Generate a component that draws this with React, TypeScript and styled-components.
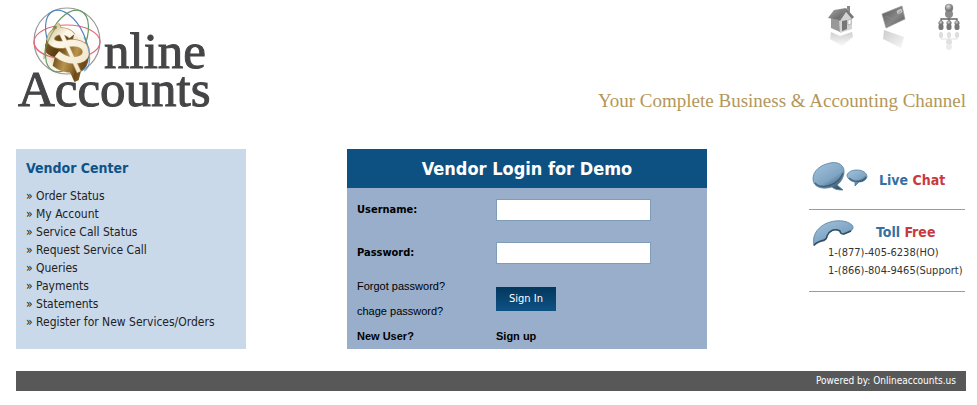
import React from "react";
import styled, { createGlobalStyle } from "styled-components";

const sans = `"DejaVu Sans Condensed", "DejaVu Sans", Tahoma, sans-serif`;

const GlobalStyle = createGlobalStyle`
  * { box-sizing: border-box; }
  body { margin: 0; background: #fff; color: #000; font: 12px/18px ${sans}; }
  a { color: inherit; text-decoration: none; }
  h1, h2, p, ul { margin: 0; padding: 0; }
`;

const Page = styled.div`
  padding: 0 11px 0 16px;
`;

const Header = styled.header`
  display: flex;
  justify-content: space-between;
  height: 149px;
`;

const Logo = styled.a`
  display: flex;
  flex-direction: column;
  padding: 4px 0 0 2px;
  font: 51px/38px "Liberation Serif", serif;
  color: #454547;
  -webkit-text-stroke: 1px #454547;
`;

const LogoTop = styled.span`
  display: flex;
  align-items: flex-end;
  height: 66px;
  padding-left: 12px;
`;

const Emblem = styled.svg`
  flex: none;
  width: 74px;
  height: 80px;
  align-self: flex-start;
`;

const HeaderSide = styled.div`
  display: flex;
  flex-direction: column;
  align-items: flex-end;
  justify-content: space-between;
  padding: 2px 0 36px;
`;

const QuickLinks = styled.nav`
  display: flex;
  gap: 24px;
  padding-right: 2px;

  a, svg { display: block; }
`;

const Tagline = styled.p`
  font: 19px/24px "Liberation Serif", serif;
  color: #b3975a;
`;

const Main = styled.main`
  display: flex;
  justify-content: space-between;
  align-items: stretch;
`;

const Sidebar = styled.nav`
  width: 230px;
  min-height: 200px;
  padding: 10px;
  background: #cad9ea;
`;

const SidebarTitle = styled.h2`
  margin-bottom: 10px;
  font-size: 14px;
  line-height: 18px;
  color: #0e5387;
`;

const LinkList = styled.ul`
  list-style: none;
  color: #222;

  li::before { content: "» "; }
`;

const LoginPanel = styled.form`
  width: 360px;
  background: #98aeca;
  font: 11px/18px "Liberation Sans", Arial, sans-serif;
`;

const LoginTitle = styled.h1`
  background: #0d5183;
  color: #fff;
  font: bold 18px/39px ${sans};
  text-align: center;
`;

const Fields = styled.div`
  display: grid;
  grid-template-columns: 139px 1fr;
  grid-template-rows: 43px 43px 49px 25px;
  align-items: center;
  padding-left: 10px;
`;

const Label = styled.label`
  font: bold 11px/18px ${sans};
`;

const Input = styled.input`
  width: 155px;
  height: 22px;
  padding: 1px 4px;
  border: 1px solid #7f9db9;
  background: #fff;
  font: 12px ${sans};
`;

const HelpLinks = styled.div`
  display: flex;
  flex-direction: column;
  gap: 7px;
`;

const SignIn = styled.button`
  width: 60px;
  height: 24px;
  padding: 0;
  border: 0;
  background: linear-gradient(#03375d, #0e5285);
  color: #fff;
  font: 11px/22px ${sans};
`;

const Strong = styled.strong`
  font-weight: bold;
`;

const Contact = styled.aside`
  width: 158px;
  padding: 0 1px;
  color: #333;
`;

const ContactBlock = styled.section<{ $top: number; $bottom: number }>`
  padding: ${(p) => p.$top}px 0 ${(p) => p.$bottom}px;
  border-bottom: 1px solid #7ba4c8;
`;

const ContactHead = styled.a<{ $gap: number; $drop?: number }>`
  display: flex;
  align-items: center;
  gap: ${(p) => p.$gap}px;
  padding-left: 3px;
  font: bold 14px/18px ${sans};
  color: #38709f;

  span { padding-top: ${(p) => p.$drop ?? 0}px; }
  b { color: #c93a40; }
`;

const Phone = styled.p`
  padding-left: 19px;
  font-size: 11px;
  white-space: nowrap;
`;

const Footer = styled.footer`
  margin-top: 22px;
  padding-right: 10px;
  background: #585858;
  color: #fff;
  font-size: 10px;
  line-height: 20px;
  text-align: right;
`;

const curve = "M42 32C36 25 24 26 21 33C19 40 28 42 36 40C46 37 57 41 56 49C54 58 38 59 27 50";
const bar = "M27 20L49 68";

const LogoEmblem = () => (
  <Emblem viewBox="0 0 74 80" aria-hidden="true">
    <defs>
      <linearGradient id="goldSide" gradientUnits="userSpaceOnUse" x1="15" y1="30" x2="60" y2="70">
        <stop offset="0" stopColor="#8a692d" />
        <stop offset=".3" stopColor="#5c3d12" />
        <stop offset=".55" stopColor="#b8944c" />
        <stop offset=".8" stopColor="#6a4716" />
        <stop offset="1" stopColor="#b08b45" />
      </linearGradient>
      <linearGradient id="goldFace" gradientUnits="userSpaceOnUse" x1="20" y1="22" x2="56" y2="62">
        <stop offset="0" stopColor="#d3bb88" />
        <stop offset=".3" stopColor="#fdf8ec" />
        <stop offset="1" stopColor="#f2e6cc" />
      </linearGradient>
      <radialGradient id="glow">
        <stop offset=".4" stopColor="#d8bd82" stopOpacity=".7" />
        <stop offset="1" stopColor="#fff" stopOpacity="0" />
      </radialGradient>
    </defs>
    <ellipse cx="36" cy="48" rx="30" ry="29" fill="url(#glow)" />
    <g fill="none" strokeWidth="1.2">
      <circle cx="37" cy="37" r="33" stroke="#999" />
      <ellipse cx="37" cy="38" rx="33" ry="17" stroke="#e4697a" />
      <ellipse cx="37" cy="37" rx="18" ry="33" stroke="#5286ba" transform="rotate(-25 37 37)" />
      <ellipse cx="37" cy="37" rx="18" ry="33" stroke="#659a60" transform="rotate(25 37 37)" />
    </g>
    <g fill="none" stroke="url(#goldSide)">
      {[9, 8, 7, 6, 5, 4, 3, 2, 1].map((d) => (
        <g key={d} transform={`translate(${-d / 4} ${d})`}>
          <path d={curve} strokeWidth="7" />
          <path d={bar} strokeWidth="5" />
        </g>
      ))}
    </g>
    <g fill="none" stroke="#b2935a">
      <path d={curve} strokeWidth="8" />
      <path d={bar} strokeWidth="5" />
    </g>
    <g fill="none" stroke="url(#goldFace)">
      <path d={curve} strokeWidth="6.5" />
      <path d={bar} strokeWidth="3.6" />
    </g>
    <g fill="none" strokeWidth="1.2" opacity=".7">
      <path d="M4 38A33 17 0 0 0 18 52" stroke="#e4697a" />
      <path d="M14 55C14 45 19 32 27 22" stroke="#659a60" />
      <path d="M54 33C62 50 61 63 54 67" stroke="#5286ba" />
    </g>
  </Emblem>
);

const HomeIcon = () => (
  <svg width="30" height="50" viewBox="0 0 30 50" aria-hidden="true">
    <defs>
      <linearGradient id="roof" x1="0" y1="0" x2="1" y2="1">
        <stop stopColor="#aaa" /><stop offset="1" stopColor="#555" />
      </linearGradient>
      <linearGradient id="fadeA" x1="0" y1="0" x2="0" y2="1">
        <stop stopColor="#d0d0d0" /><stop offset="1" stopColor="#fafafa" />
      </linearGradient>
    </defs>
    <path d="M5 30L14 34L26 30L27 35L16 44L4 37Z" fill="url(#fadeA)" />
    <path d="M5 16L14 18V30L5 26Z" fill="#999" />
    <path d="M13 18L20 10L26 16V27L14 31Z" fill="#d3d3d3" />
    <path d="M16 19L21 18V27L16 29Z" fill="#777" />
    <path d="M22 18L25 17V22L22 23Z" fill="#fff" stroke="#999" strokeWidth=".6" />
    <path d="M2 16L8 8L20 6L13 18Z" fill="url(#roof)" />
    <path d="M12 18L20 6L28 15L26 17L20 10L14 19Z" fill="#777" />
    <path d="M21 7V4H24V11Z" fill="#888" />
  </svg>
);

const MailIcon = () => (
  <svg width="30" height="50" viewBox="0 0 30 50" aria-hidden="true">
    <defs>
      <linearGradient id="card" x1="0" y1="0" x2="1" y2="1">
        <stop stopColor="#555" /><stop offset=".55" stopColor="#888" /><stop offset="1" stopColor="#555" />
      </linearGradient>
      <linearGradient id="fadeB" x1="0" y1="0" x2="1" y2="1">
        <stop stopColor="#ccc" /><stop offset="1" stopColor="#f8f8f8" />
      </linearGradient>
    </defs>
    <path d="M4 28L24 35L21 46L3 37Z" fill="url(#fadeB)" />
    <path d="M2 12L22 4L25 17L6 26Z" fill="url(#card)" stroke="#999" strokeWidth=".7" />
    <path d="M17 9L21 7L22 10L18 12Z" fill="#bbb" stroke="#ddd" strokeWidth=".6" />
    <path d="M5 14l9 3 7-8" fill="none" stroke="#888" strokeWidth=".7" />
  </svg>
);

const SitemapIcon = () => (
  <svg width="30" height="50" viewBox="0 0 30 50" aria-hidden="true">
    <defs>
      <radialGradient id="ball" cx=".4" cy=".3">
        <stop stopColor="#ddd" /><stop offset="1" stopColor="#777" />
      </radialGradient>
    </defs>
    <path d="M15 15V21M7 21V17H23V21" fill="none" stroke="#666" strokeWidth="1.3" />
    <ellipse cx="15" cy="12" rx="4" ry="4" fill="#8b8b8b" />
    <circle cx="15" cy="6" r="4" fill="url(#ball)" stroke="#888" strokeWidth=".5" />
    {[7, 15, 23].map((x) => (
      <g key={x}>
        <rect x={x - 2.5} y="22" width="5" height="6" rx="2" fill="#777" />
        <circle cx={x} cy="21" r="2.3" fill="url(#ball)" stroke="#777" strokeWidth=".6" />
        <rect x={x - 2} y="30" width="4" height="6" rx="2" fill="#ddd" />
      </g>
    ))}
    <path d="M15 32V38M7 36V37H23V36" fill="none" stroke="#e2e2e2" />
    <circle cx="15" cy="40" r="3" fill="#e0e0e0" />
    <circle cx="15" cy="45" r="3" fill="#ebebeb" />
  </svg>
);

const BlueFill = ({ id }: { id: string }) => (
  <defs>
    <linearGradient id={id} x1="0" y1="0" x2=".7" y2="1">
      <stop stopColor="#a4c3dc" /><stop offset=".65" stopColor="#7fa5c4" /><stop offset="1" stopColor="#36556e" />
    </linearGradient>
  </defs>
);

const ChatIcon = () => (
  <svg width="56" height="32" viewBox="0 0 56 32" aria-hidden="true">
    <BlueFill id="chat" />
    <g fill="url(#chat)" stroke="#56809f" strokeWidth=".8">
      <path d="M18 2C27 0 33 5 32 12C31 18 28 22 25 24L31 29C25 29 22 28 20 26C10 29 1 26 1 18C1 10 8 4 18 2Z" />
      <path d="M45 9C51 9 55 12 55 16C54 19 51 21 47 21L43 25L43 21C38 20 35 17 35 14C36 11 40 9 45 9Z" />
    </g>
    <path d="M3 22C9 29 26 25 31 12M37 17C42 22 51 21 54 16" fill="none" stroke="#304d63" strokeWidth="1.5" opacity=".7" />
  </svg>
);

const HandsetIcon = styled.svg`
  width: 43px;
  height: 28px;
  margin-bottom: -3px;
`;

const PhoneIcon = () => (
  <HandsetIcon viewBox="0 0 43 28" aria-hidden="true">
    <BlueFill id="phone" />
    <path d="M2 27C0 17 4 10 13 5C23 0 35 1 40 6C42 8 41 10 39 12L32 15C29 15 28 14 28 12C22 9 17 12 15 17C15 20 14 21 12 22C8 22 5 24 2 27Z" fill="url(#phone)" stroke="#56809f" strokeWidth=".8" />
    <path d="M2 26C5 23 8 22 12 21C14 20 15 18 15 17C17 12 22 9 28 12C28 14 29 15 32 15L39 12" fill="none" stroke="#304d63" strokeWidth="1.4" />
  </HandsetIcon>
);

const links = [
  "Order Status",
  "My Account",
  "Service Call Status",
  "Request Service Call",
  "Queries",
  "Payments",
  "Statements",
  "Register for New Services/Orders",
];

export default function App() {
  return (
    <>
      <GlobalStyle />
      <Page>
        <Header>
          <Logo href="#">
            <LogoTop>
              <LogoEmblem />
              <span>nline</span>
            </LogoTop>
            <span>Accounts</span>
          </Logo>
          <HeaderSide>
            <QuickLinks>
              <a href="#" aria-label="Home"><HomeIcon /></a>
              <a href="#" aria-label="Contact us"><MailIcon /></a>
              <a href="#" aria-label="Site map"><SitemapIcon /></a>
            </QuickLinks>
            <Tagline>Your Complete Business &amp; Accounting Channel</Tagline>
          </HeaderSide>
        </Header>
        <Main>
          <Sidebar>
            <SidebarTitle>Vendor Center</SidebarTitle>
            <LinkList>
              {links.map((text) => (
                <li key={text}><a href="#">{text}</a></li>
              ))}
            </LinkList>
          </Sidebar>
          <LoginPanel onSubmit={(e) => e.preventDefault()}>
            <LoginTitle>Vendor Login for Demo</LoginTitle>
            <Fields>
              <Label htmlFor="username">Username:</Label>
              <Input id="username" type="text" />
              <Label htmlFor="password">Password:</Label>
              <Input id="password" type="password" />
              <HelpLinks>
                <a href="#">Forgot password?</a>
                <a href="#">chage password?</a>
              </HelpLinks>
              <SignIn type="submit">Sign In</SignIn>
              <Strong>New User?</Strong>
              <Strong><a href="#">Sign up</a></Strong>
            </Fields>
          </LoginPanel>
          <Contact>
            <ContactBlock $top={12} $bottom={16}>
              <ContactHead href="#" $gap={11} $drop={6}>
                <ChatIcon />
                <span>Live <b>Chat</b></span>
              </ContactHead>
            </ContactBlock>
            <ContactBlock $top={9} $bottom={11}>
              <ContactHead as="div" $gap={21}>
                <PhoneIcon />
                <span>Toll <b>Free</b></span>
              </ContactHead>
              <Phone>1-(877)-405-6238(HO)</Phone>
              <Phone>1-(866)-804-9465(Support)</Phone>
            </ContactBlock>
          </Contact>
        </Main>
        <Footer>Powered by: <a href="#">Onlineaccounts.us</a></Footer>
      </Page>
    </>
  );
}
